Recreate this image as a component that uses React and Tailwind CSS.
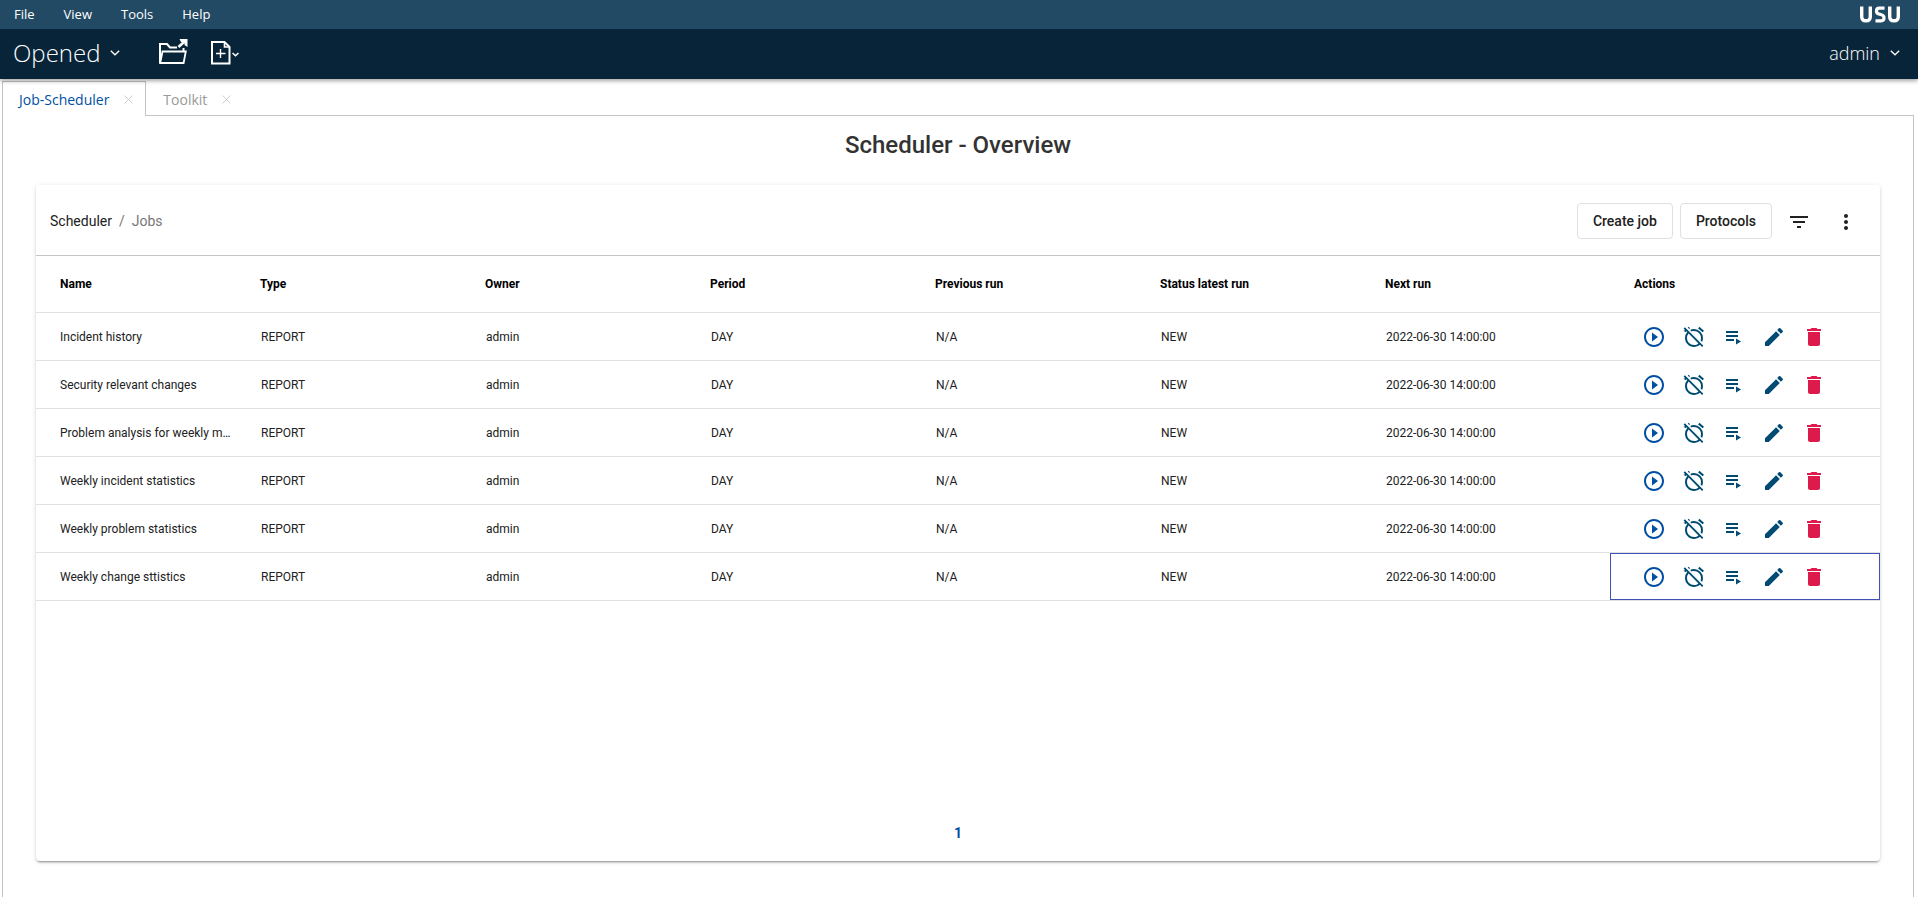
import React from "react";
import {
  MdPlayCircleOutline,
  MdAlarmOff,
  MdEdit,
  MdDelete,
  MdFilterList,
  MdMoreVert,
} from "react-icons/md";

const menus = ["File", "View", "Tools", "Help"];
const columns = ["Name", "Type", "Owner", "Period", "Previous run", "Status latest run", "Next run", "Actions"];
const jobs = [
  "Incident history",
  "Security relevant changes",
  "Problem analysis for weekly meeting",
  "Weekly incident statistics",
  "Weekly problem statistics",
  "Weekly change sttistics",
];
const jobFields = ["REPORT", "admin", "DAY", "N/A", "NEW", "2022-06-30 14:00:00"];

function Chevron({ className, strokeWidth = 1.3 }) {
  return (
    <svg viewBox="0 0 10 6" className={className} fill="none" stroke="currentColor" strokeWidth={strokeWidth} aria-hidden="true">
      <path d="M0.8 0.8 L5 4.8 L9.2 0.8" />
    </svg>
  );
}

function FolderOpenIcon() {
  return (
    <svg width="30" height="26" viewBox="0 0 30 26" fill="none" stroke="#fff" aria-hidden="true">
      <path d="M2 24V5H9L12 8.5H19" strokeWidth="2" />
      <path d="M25.5 9V12" strokeWidth="2" />
      <path d="M2.2 24 L4.5 12.5 H27.8 L25.6 24 Z" strokeWidth="1.8" />
      <path d="M20.5 8 L26.5 2.5" strokeWidth="2.6" />
      <path d="M21.5 0H29.5V8L26.5 6V3H23Z" fill="#fff" stroke="none" />
    </svg>
  );
}

function NewPageIcon() {
  return (
    <svg width="20" height="24" viewBox="0 0 20 24" fill="none" stroke="#fff" aria-hidden="true">
      <path d="M1 1H13.5L18.5 6V22.5H1Z" strokeWidth="2" />
      <path d="M13.5 1V6H18.5" strokeWidth="1.6" />
      <path d="M5 12.5H14.5M9.5 8V17" strokeWidth="1.4" />
    </svg>
  );
}

function QueueIcon() {
  return (
    <svg width="24" height="24" viewBox="0 0 24 24" fill="currentColor" aria-hidden="true">
      <path d="M4 6h12v2H4zM4 10h12v2H4zM4 14h8v2H4zM14 13.4v6l5-3z" />
    </svg>
  );
}

function UsuLogo() {
  return (
    <svg width="42" height="17" viewBox="0 0 42 17" fill="none" stroke="#fff" strokeWidth="3.4" role="img" aria-label="USU">
      <path d="M2.7 0.5V10.5Q2.7 14.8 7 14.8Q11.3 14.8 11.3 10.5V0.5" />
      <path d="M25.5 2.2H20.5Q17.5 2.2 17.5 5Q17.5 7.4 20 8L22.4 8.8Q25 9.4 25 12Q25 14.8 22 14.8H16.5" strokeWidth="3.2" />
      <path d="M30.7 0.5V10.5Q30.7 14.8 35 14.8Q39.3 14.8 39.3 10.5V0.5" />
    </svg>
  );
}

function CloseIcon() {
  return (
    <svg width="9" height="9" viewBox="0 0 9 9" stroke="#cfcfcf" strokeWidth="1" aria-hidden="true">
      <path d="M0.5 0.5L8.5 8.5M8.5 0.5L0.5 8.5" />
    </svg>
  );
}

const iconButton = "flex size-10 items-center justify-center";

function RowActions() {
  return (
    <div className="flex items-center text-[#004b73]">
      <button aria-label="Run now" className={iconButton + " text-[#004fa3]"}><MdPlayCircleOutline size={24} /></button>
      <button aria-label="Deactivate" className={iconButton}><MdAlarmOff size={24} /></button>
      <button aria-label="Show runs" className={iconButton}><QueueIcon /></button>
      <button aria-label="Edit" className={iconButton}><MdEdit size={24} /></button>
      <button aria-label="Delete" className={iconButton + " text-[#dc1a4b]"}><MdDelete size={24} /></button>
    </div>
  );
}

export default function App() {
  return (
    <div className="flex min-h-screen flex-col bg-white font-['Roboto',sans-serif] text-[#212121]">
      <header className="relative font-['Open_Sans',sans-serif] text-white shadow-[0_2px_4px_rgba(0,0,0,0.35)]">
        <div className="flex h-[29px] items-center justify-between bg-[#234a64] pr-[17px] pl-[14px]">
          <nav className="flex gap-[29px] text-[13px]">
            {menus.map((m) => (
              <button key={m}>{m}</button>
            ))}
          </nav>
          <UsuLogo />
        </div>
        <div className="flex h-[50px] items-center justify-between bg-[#082438] pr-[18px] pb-[2px] pl-[13px]">
          <div className="flex items-center">
            <button className="flex items-center gap-[10px] text-2xl font-light">
              Opened
              <Chevron className="h-[6px] w-[10px]" />
            </button>
            <button aria-label="Open" className="ml-[38px] pb-[2px]"><FolderOpenIcon /></button>
            <button aria-label="New" className="ml-[23px] flex items-center gap-px">
              <NewPageIcon />
              <Chevron className="mt-[2px] h-[5px] w-[7px]" strokeWidth={2.2} />
            </button>
          </div>
          <button className="flex items-center gap-[10px] text-lg font-light">
            admin
            <Chevron className="h-[6px] w-[10px]" />
          </button>
        </div>
      </header>

      <div className="mt-[2px] mr-1 ml-[2px] flex grow flex-col">
        <div className="flex h-[35px] font-['Open_Sans',sans-serif] text-sm" role="tablist">
          <div className="flex items-center gap-[15px] border-t border-r border-l border-[#c4c4c4] pt-px pr-3 pl-4">
            <button role="tab" aria-selected="true" className="text-[#004fa3]">Job-Scheduler</button>
            <button aria-label="Close Job-Scheduler"><CloseIcon /></button>
          </div>
          <div className="flex grow items-center gap-[15px] border-b border-[#c4c4c4] pt-[3px] pl-[17px]">
            <button role="tab" aria-selected="false" className="text-[#999]">Toolkit</button>
            <button aria-label="Close Toolkit"><CloseIcon /></button>
          </div>
        </div>

        <main className="flex grow flex-col border-r border-l border-[#c4c4c4] px-[33px] pb-9">
          <h1 className="pt-[13px] pb-6 text-center text-2xl font-medium text-[#333]">Scheduler - Overview</h1>

          <section className="flex grow flex-col rounded bg-white shadow-[0_3px_1px_-2px_rgba(0,0,0,0.2),0_2px_2px_0_rgba(0,0,0,0.14),0_1px_5px_0_rgba(0,0,0,0.12)]">
            <div className="flex h-[71px] items-center justify-between border-b border-[#c4c4c4] px-[14px] pt-[2px]">
              <nav aria-label="Breadcrumb" className="flex gap-[7px] text-sm">
                <a href="#scheduler">Scheduler</a>
                <span className="text-[#777]">/</span>
                <span className="text-[#777]">Jobs</span>
              </nav>
              <div className="flex items-center gap-[7px] text-sm font-medium">
                <button className="h-9 rounded border border-[#e0e0e0] px-[15px]">Create job</button>
                <button className="h-9 rounded border border-[#e0e0e0] px-[15px]">Protocols</button>
                <button aria-label="Filter" className={iconButton + " pt-px"}><MdFilterList size={24} /></button>
                <button aria-label="More" className={iconButton + " pt-px"}><MdMoreVert size={24} /></button>
              </div>
            </div>

            <table className="w-full table-fixed border-separate border-spacing-0 text-left text-xs">
              <colgroup>
                <col className="w-[224px]" />
                <col /><col /><col /><col /><col /><col />
                <col className="w-[270px]" />
              </colgroup>
              <thead>
                <tr className="h-[57px] text-black">
                  {columns.map((c) => (
                    <th key={c} scope="col" className="border-b border-[#e0e0e0] p-0 font-bold first:pl-6 last:pl-6">{c}</th>
                  ))}
                </tr>
              </thead>
              <tbody>
                {jobs.map((name, i) => (
                  <tr key={name} className="h-12">
                    <td className="truncate border-b border-[#e0e0e0] py-0 pr-7 pl-6">{name}</td>
                    {jobFields.map((f) => (
                      <td key={f} className="border-b border-[#e0e0e0] p-0 pl-px">{f}</td>
                    ))}
                    <td className="border-b border-[#e0e0e0] p-0">
                      <div className={i === jobs.length - 1 ? "flex h-[47px] items-center border border-[#3f51b5] pl-[23px]" : "flex h-[47px] items-center pl-6"}>
                        <RowActions />
                      </div>
                    </td>
                  </tr>
                ))}
              </tbody>
            </table>

            <div className="mt-auto flex justify-center pb-[18px]">
              <button aria-current="page" className="text-sm font-bold text-[#004fa3]">1</button>
            </div>
          </section>
        </main>
      </div>
    </div>
  );
}
